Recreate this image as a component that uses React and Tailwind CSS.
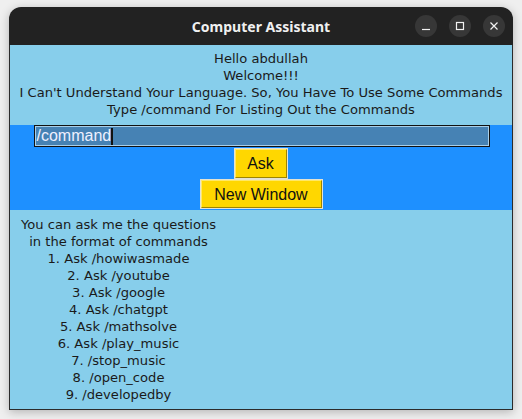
export default function App() {
  const list = [
    "You can ask me the questions",
    "in the format of commands",
    "1. Ask /howiwasmade",
    "2. Ask /youtube",
    "3. Ask /google",
    "4. Ask /chatgpt",
    "5. Ask /mathsolve",
    "6. Ask /play_music",
    "7. /stop_music",
    "8. /open_code",
    "9. /developedby",
  ];
  return (
    <div className="w-[522px] h-[419px] bg-[#efefef] pt-[7px] pl-[9px] overflow-hidden">
      <div className="w-[504px] flex flex-col shadow-[0_2px_10px_rgba(0,0,0,0.25)] rounded-t-[12px]">
        {/* Title bar */}
        <div className="h-[38px] bg-[#222222] rounded-t-[12px] relative flex items-center justify-center">
          <span className="text-[#f0f0f0] text-[14px] font-bold font-['Noto_Sans',sans-serif] mt-[1px]">
            Computer Assistant
          </span>
          <div className="absolute right-[8px] top-[8px] flex gap-[12px]">
            <div className="w-[22px] h-[22px] rounded-full bg-[#373737] flex items-center justify-center">
              <svg width="10" height="10" viewBox="0 0 10 10">
                <line x1="1" y1="8.5" x2="9" y2="8.5" stroke="#f2f2f2" strokeWidth="1.2" />
              </svg>
            </div>
            <div className="w-[22px] h-[22px] rounded-full bg-[#373737] flex items-center justify-center">
              <svg width="10" height="10" viewBox="0 0 10 10">
                <rect x="1.5" y="1.5" width="7" height="7" fill="none" stroke="#f2f2f2" strokeWidth="1.2" />
              </svg>
            </div>
            <div className="w-[22px] h-[22px] rounded-full bg-[#373737] flex items-center justify-center">
              <svg width="10" height="10" viewBox="0 0 10 10">
                <path d="M1.5 1.5 L8.5 8.5 M8.5 1.5 L1.5 8.5" stroke="#f2f2f2" strokeWidth="1.2" />
              </svg>
            </div>
          </div>
        </div>
        {/* Content */}
        <div className="h-[365px] bg-[#87CEEB] border-x border-b border-[#2b2b2b] flex flex-col font-['DejaVu_Sans',sans-serif] text-[13.1px] leading-[17px] text-[#1a1a1a]">
          <div className="flex flex-col items-center pt-[5px] h-[80px]">
            <div>Hello abdullah</div>
            <div>Welcome!!!</div>
            <div>I Can't Understand Your Language. So, You Have To Use Some Commands</div>
            <div>Type /command For Listing Out the Commands</div>
          </div>
          <div className="h-[85px] bg-[#1E90FF] flex flex-col items-center">
            <div className="w-[456px] h-[22px] border border-[#111] bg-[#4682B4] flex items-center ml-[1px]">
              <div className="w-full h-full border border-[#a9cfe8] flex items-center pl-[1px]">
                <span className="font-['Liberation_Sans',sans-serif] text-[16px] leading-[18px] text-[#eef0ff]">/command</span>
                <span className="w-[2px] h-[17px] bg-[#111]" />
              </div>
            </div>
            <div className="mt-[1px] border border-[#e4e2d2] bg-[#FFD700] -ml-[1px]">
              <div className="w-[52px] h-[29px] border-t border-l border-[#ffe866] border-b border-r border-b-[#9c8400] border-r-[#9c8400] flex items-center justify-center font-['Liberation_Sans',sans-serif] text-[16px] text-[#111]">
                Ask
              </div>
            </div>
            <div className="border border-[#e4e2d2] bg-[#FFD700]">
              <div className="w-[121px] h-[28px] border-t border-l border-[#ffe866] border-b border-r border-b-[#9c8400] border-r-[#9c8400] flex items-center justify-center font-['Liberation_Sans',sans-serif] text-[16px] text-[#111]">
                New Window
              </div>
            </div>
          </div>
          <div className="pt-[6px] pl-[11px] flex">
            <div className="flex flex-col items-center">
              {list.map((l) => (
                <div key={l}>{l}</div>
              ))}
            </div>
          </div>
        </div>
      </div>
    </div>
  );
}
